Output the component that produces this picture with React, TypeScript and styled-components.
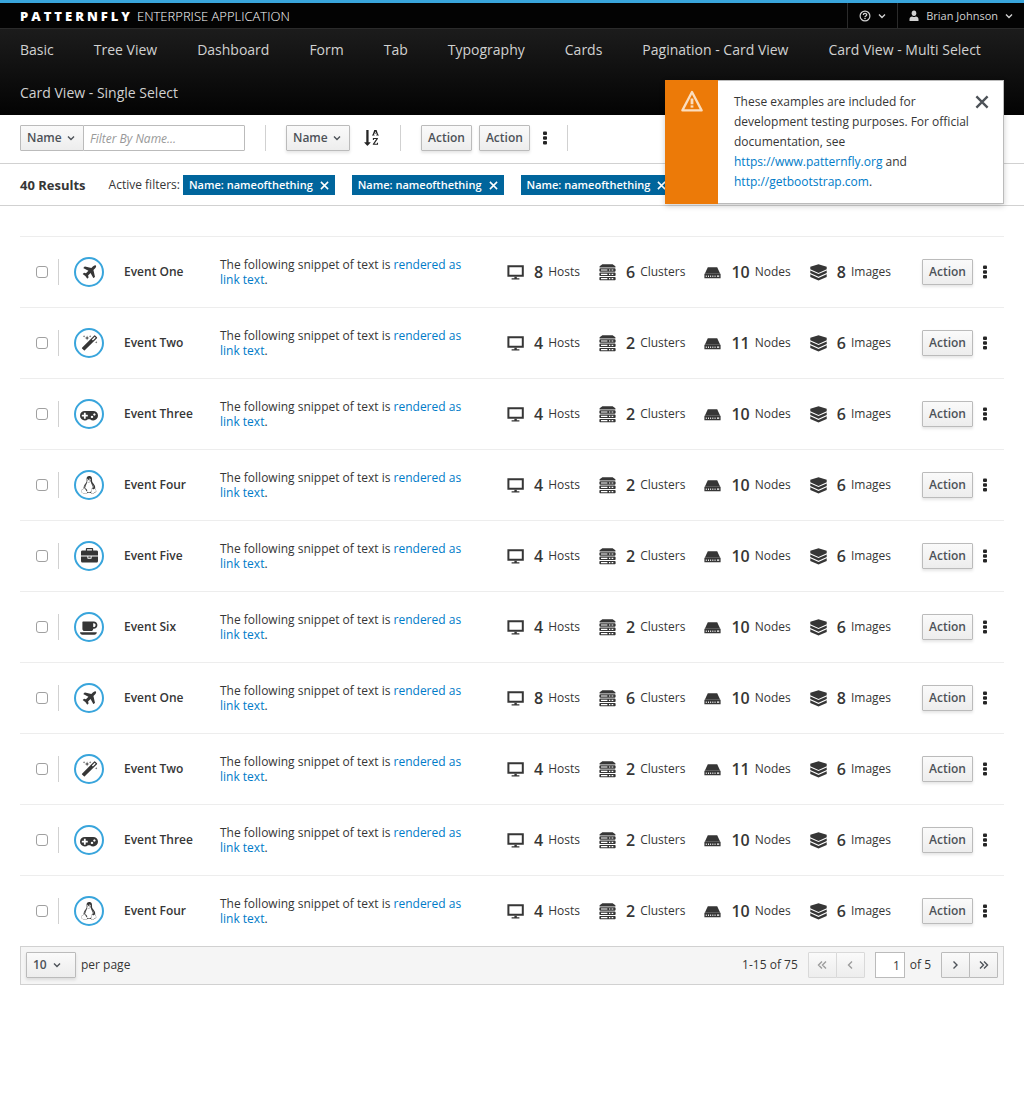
import React from "react";
import styled, { createGlobalStyle, css } from "styled-components";
import { FaLinux } from "react-icons/fa";

const GlobalStyle = createGlobalStyle`
  *, *::before, *::after { box-sizing: border-box; }
  body {
    margin: 0;
    background: #fff;
    color: #363636;
    font-family: "Open Sans", "Noto Sans", sans-serif;
    font-size: 12px;
    line-height: 20px;
  }
  button, input, select { font: inherit; color: inherit; margin: 0; }
  a { color: #007bc8; text-decoration: none; }
  ul, h2, p { margin: 0; padding: 0; }
  ul { list-style: none; }
`;

/* ---------- icons ---------- */

const Svg = styled.svg`
  display: block;
  flex: none;
  fill: currentColor;
`;

const fa: Record<string, { w: number; d: string }> = {
  plane: {
    w: 1792,
    d: "M1568 160q44 52 12 148t-108 172l-161 161 160 696q5 19-12 33l-128 96q-7 6-19 6-4 0-7-1-15-3-21-16l-279-508-259 259 53 194q5 17-8 31l-96 96q-9 9-23 9h-2q-15-2-24-13l-189-252-252-189q-11-7-13-23-1-13 9-25l96-97q9-9 23-9 6 0 8 1l194 53 259-259-508-279q-14-8-17-24-2-16 9-27l128-128q14-13 30-8l665 159 160-160q76-76 172-108t148 12z",
  },
  magic: {
    w: 1792,
    d: "M1254 581l293-293-107-107-293 293zm447-293q0 27-18 45l-1286 1286q-18 18-45 18t-45-18l-198-198q-18-18-18-45t18-45l1286-1286q18-18 45-18t45 18l198 198q18 18 18 45zm-1351-190l98 30-98 30-30 98-30-98-98-30 98-30 30-98zm350 162l196 60-196 60-60 196-60-196-196-60 196-60 60-196zm930 478l98 30-98 30-30 98-30-98-98-30 98-30 30-98zm-640-640l98 30-98 30-30 98-30-98-98-30 98-30 30-98z",
  },
  gamepad: {
    w: 1920,
    d: "M832 1088v-128q0-14-9-23t-23-9h-192v-192q0-14-9-23t-23-9h-128q-14 0-23 9t-9 23v192h-192q-14 0-23 9t-9 23v128q0 14 9 23t23 9h192v192q0 14 9 23t23 9h128q14 0 23-9t9-23v-192h192q14 0 23-9t9-23zm576 64q0-53-37.5-90.5t-90.5-37.5-90.5 37.5-37.5 90.5 37.5 90.5 90.5 37.5 90.5-37.5 37.5-90.5zm256-256q0-53-37.5-90.5t-90.5-37.5-90.5 37.5-37.5 90.5 37.5 90.5 90.5 37.5 90.5-37.5 37.5-90.5zm256 128q0 212-150 362t-362 150q-192 0-338-128h-220q-146 128-338 128-212 0-362-150t-150-362 150-362 362-150h896q212 0 362 150t150 362z",
  },
  briefcase: {
    w: 1792,
    d: "M640 256h512v-128h-512v128zm1152 640v480q0 66-47 113t-113 47h-1472q-66 0-113-47t-47-113v-480h672v160q0 26 19 45t45 19h320q26 0 45-19t19-45v-160h672zm-768 0v128h-256v-128h256zm768-480v384h-1792v-384q0-66 47-113t113-47h352v-160q0-40 28-68t68-28h576q40 0 68 28t28 68v160h352q66 0 113 47t47 113z",
  },
  coffee: {
    w: 1920,
    d: "M1664 640q0-80-56-136t-136-56h-64v384h64q80 0 136-56t56-136zm-1664 768h1792q0 106-75 181t-181 75h-1280q-106 0-181-75t-75-181zm1856-768q0 159-112.5 271.5t-271.5 112.5h-64v32q0 92-66 158t-158 66h-704q-92 0-158-66t-66-158v-736q0-26 19-45t45-19h1152q159 0 271.5 112.5t112.5 271.5z",
  },
  sortAlpha: {
    w: 1792,
    d: "M1191 408h177l-72-218-12-47q-2-16-2-20h-4l-3 20q0 1-3.5 18t-7.5 29zm-455 1000q0 12-10 24l-319 319q-10 9-23 9-12 0-23-9l-320-320q-15-16-7-35 8-20 30-20h192v-1376q0-14 9-23t23-9h192q14 0 23 9t9 23v1376h192q14 0 23 9t9 23zm836 10v233h-584v-90l369-529q12-18 21-27l11-9v-3q-2 0-6.5.5t-7.5.5q-12 3-30 3h-232v115h-120v-229h567v89l-369 530q-6 8-21 26l-11 11v2l14-2q9-2 30-2h248v-119h121zm89-898v106h-288v-106h75l-47-144h-243l-47 144h75v106h-287v-106h70l230-662h162l230 662h70z",
  },
};

const FaGlyph = ({ name, size }: { name: string; size: number }) => (
  <Svg
    aria-hidden
    viewBox={`0 0 ${fa[name].w} 1792`}
    width={Math.round((size * fa[name].w) / 1792)}
    height={size}
  >
    <path d={fa[name].d} />
  </Svg>
);

const Chevron = ({ size = 8 }: { size?: number }) => (
  <Svg aria-hidden width={size} height={size} viewBox="0 0 8 8">
    <path d="M1 2.5L4 5.5L7 2.5" fill="none" stroke="currentColor" strokeWidth="1.4" />
  </Svg>
);

const Angle = ({ paths }: { paths: string }) => (
  <Svg aria-hidden width={12} height={12} viewBox="0 0 12 12">
    <path d={paths} fill="none" stroke="currentColor" strokeWidth="1.4" />
  </Svg>
);

const Dots = () => (
  <Svg aria-hidden width={4} height={14} viewBox="0 0 4 14">
    <rect x="0" y="0.5" width="4" height="3.6" rx="1" />
    <rect x="0" y="5.2" width="4" height="3.6" rx="1" />
    <rect x="0" y="9.9" width="4" height="3.6" rx="1" />
  </Svg>
);

const Cross = ({ size, weight }: { size: number; weight: number }) => (
  <Svg aria-hidden width={size} height={size} viewBox="0 0 12 12">
    <path d="M1.2 1.2L10.8 10.8M10.8 1.2L1.2 10.8" stroke="currentColor" strokeWidth={weight} />
  </Svg>
);

const ScreenIcon = () => (
  <Svg aria-hidden width={17} height={17} viewBox="0 0 17 17">
    <path fillRule="evenodd" d="M.4 1.2h16.400V12.800H.4zM2.400 3.200v7.600h12.400v-7.600z" />
    <path d="M7.400 12.800h2.400v1.500h2.600v1.200H4.600v-1.200h2.800z" />
  </Svg>
);

const slab = (y: number) =>
  `M1 ${y}h15l.6 .6v2.200l-.6 .6H1l-.6-.6v-2.200zM2 ${y + 1.1}v1.200h6.400v-1.200zM10 ${y + 1.1}v1.200h1.300v-1.200zM12.600 ${y + 1.1}v1.200h1.700v-1.200z`;

const ClusterIcon = () => (
  <Svg aria-hidden width={17} height={17} viewBox="0 0 17 17">
    <path d="M3.400 .2h10.200l2.800 2V3.500H.6V2.200z" />
    <path fillRule="evenodd" d={slab(4.3) + slab(8.6) + slab(12.9)} />
  </Svg>
);

const NodeIcon = () => (
  <Svg aria-hidden width={17} height={17} viewBox="0 0 17 17">
    <path d="M3.800 3.200h9.400L16.200 9.800H.8z" />
    <path
      fillRule="evenodd"
      d="M.4 9.800h16.200v4.400H.4zM1.800 11.400v1.600h.9v-1.600zM4 11.400v1.600h.9v-1.600zM6.200 11.400v1.600h.9v-1.600zM8.400 11.400v1.600h.9v-1.600zM10.600 11.400v1.600h.9v-1.600zM13 11.600v1.100h2.200v-1.100z"
    />
  </Svg>
);

const ImageIcon = () => (
  <Svg aria-hidden width={17} height={17} viewBox="0 0 17 17">
    <path d="M8.500 .2L16.700 2.700V5.300L8.500 8.900 .3 5.300V2.700z" />
    <path d="M.3 6.500L8.500 10.100 16.700 6.500V9.100L8.500 12.700 .3 9.100z" />
    <path d="M.3 10.300L8.500 13.900 16.700 10.300V12.900L8.500 16.500 .3 12.900z" />
  </Svg>
);

const UserIcon = () => (
  <Svg aria-hidden width={10} height={12} viewBox="0 0 10 12">
    <ellipse cx="5" cy="3.3" rx="2.3" ry="2.7" />
    <path d="M.5 11V9.2C.5 7.5 1.8 6.8 3.2 6.5c1 .7 2.600 .7 3.600 0C8.200 6.800 9.500 7.500 9.500 9.200V11z" />
  </Svg>
);

const HelpIcon = () => (
  <Svg aria-hidden width={12} height={12} viewBox="0 0 12 12">
    <circle cx="6" cy="6" r="4.9" fill="none" stroke="currentColor" strokeWidth="1.2" />
    <path d="M4.300 4.900C4.300 2.900 7.700 2.900 7.700 4.800 7.700 6 6 5.900 6 7.100" fill="none" stroke="currentColor" strokeWidth="1.300" />
    <rect x="5.300" y="7.800" width="1.400" height="1.300" />
  </Svg>
);

const WarningIcon = () => (
  <Svg aria-hidden width={22} height={22} viewBox="0 0 22 22">
    <path d="M11 2L20.600 20.400H1.400z" fill="none" stroke="currentColor" strokeWidth="2.300" strokeLinejoin="round" />
    <path d="M9.600 8.500h2.800v5.800H9.600z" />
    <rect x="9.600" y="15.400" width="2.800" height="2.200" />
  </Svg>
);

/* ---------- masthead ---------- */

const Page = styled.div`
  position: relative;
`;

const Masthead = styled.header`
  background: #030303;
  border-top: 3px solid #39a5dc;
  color: #d1d1d1;
`;

const TopBar = styled.div`
  display: flex;
  justify-content: space-between;
  height: 25px;
  padding-left: 20px;
`;

const Brand = styled.a`
  display: flex;
  align-items: center;
  gap: 4px;
  padding-top: 1px;
  color: #fff;
  font-size: 13px;
  font-weight: 300;
  white-space: nowrap;
`;

const BrandName = styled.strong`
  font-weight: 800;
  letter-spacing: 3px;
`;

const Utilities = styled.div`
  display: flex;
`;

const UtilityButton = styled.button`
  display: flex;
  align-items: center;
  gap: 7px;
  padding: 0 11px;
  border: 0;
  border-left: 1px solid #2b2b2b;
  background: none;
  color: #d1d1d1;
  font-size: 11px;
  font-weight: 500;
`;

const Nav = styled.nav`
  border-top: 1px solid #2b2b2b;
  background: linear-gradient(#1c1c1c, #030303);
`;

const NavList = styled.ul`
  display: flex;
  flex-wrap: wrap;
`;

const NavLink = styled.a`
  display: block;
  padding: 0 20px 2px;
  color: #d1d1d1;
  font-size: 14px;
  line-height: 41px;
`;

/* ---------- controls ---------- */

const raised = css`
  height: 26px;
  border: 1px solid #bbb;
  border-radius: 1px;
  background: linear-gradient(#fafafa, #ededed);
  color: #4d5258;
  font-weight: 600;
`;

const Button = styled.button`
  ${raised}
  padding: 0 6px;
  box-shadow: 0 2px 3px rgba(3, 3, 3, 0.1);
`;

const KebabButton = styled.button<{ $width: number }>`
  display: flex;
  align-items: center;
  justify-content: center;
  width: ${(p) => p.$width}px;
  height: 26px;
  padding: 0;
  border: 0;
  background: none;
  color: #252525;
`;

const SelectBox = styled.span<{ $width: number; $inset: number; $flat?: boolean }>`
  display: grid;
  align-items: center;
  width: ${(p) => p.$width}px;
  color: #4d5258;
  box-shadow: ${(p) => (p.$flat ? "none" : "0 2px 3px rgba(3, 3, 3, 0.1)")};

  > * { grid-area: 1 / 1; }
  > svg { justify-self: end; margin-right: ${(p) => p.$inset}px; pointer-events: none; }
`;

const Select = styled.select`
  ${raised}
  width: 100%;
  padding: 0 0 0 6px;
  appearance: none;
`;

type DropDownProps = { label: string; value: string; width: number; flat?: boolean; inset?: number };

const DropDown = ({ label, value, width, flat, inset = 9 }: DropDownProps) => (
  <SelectBox $width={width} $inset={inset} $flat={flat}>
    <Select aria-label={label} defaultValue={value}>
      <option>{value}</option>
    </Select>
    <Chevron />
  </SelectBox>
);

/* ---------- toolbar ---------- */

const Toolbar = styled.form`
  display: flex;
  align-items: center;
  padding: 10px 20px 12px;
  border-bottom: 1px solid #d1d1d1;
`;

const Group = styled.div<{ $gap: number; $end?: number }>`
  display: flex;
  align-items: center;
  gap: ${(p) => p.$gap}px;
  height: 26px;
  padding-right: ${(p) => p.$end ?? 20}px;
  margin-right: 20px;
  border-right: 1px solid #d1d1d1;
`;

const FilterInput = styled.input`
  width: 162px;
  height: 26px;
  margin-left: -1px;
  padding: 2px 6px;
  border: 1px solid #bbb;
  border-radius: 1px;

  &::placeholder { color: #999; font-style: italic; opacity: 1; }
`;

const SortButton = styled.button`
  display: flex;
  padding: 0;
  border: 0;
  background: none;
  color: #252525;
`;

const Results = styled.div`
  display: flex;
  align-items: center;
  padding: 11px 20px 10px;
  border-bottom: 1px solid #d1d1d1;
`;

const ResultCount = styled.h2`
  margin-right: 23px;
  font-size: 13px;
  font-weight: 700;
`;

const FilterTags = styled.ul`
  display: flex;
  gap: 17px;
  margin-left: 3px;
`;

const Tag = styled.li`
  display: flex;
  align-items: center;
  gap: 7px;
  height: 20px;
  padding: 0 6px;
  background: #00659c;
  color: #fff;
  font-size: 11px;
  font-weight: 600;
`;

const TagRemove = styled.button`
  display: flex;
  padding: 0;
  border: 0;
  background: none;
`;

/* ---------- toast ---------- */

const Toast = styled.aside`
  position: absolute;
  top: 80px;
  right: 20px;
  display: flex;
  width: 339px;
  border: 1px solid #bbb;
  border-left: 0;
  background: #fff;
  box-shadow: 0 2px 6px rgba(3, 3, 3, 0.2);
`;

const ToastFlag = styled.div`
  display: flex;
  justify-content: center;
  width: 53px;
  margin: -1px 0;
  padding-top: 10px;
  background: #ec7a08;
  color: #fbdebf;
`;

const ToastText = styled.p`
  flex: 1;
  padding: 11px 0 11px 16px;
`;

const ToastClose = styled.button`
  align-self: flex-start;
  margin: 14px 14px 0 0;
  padding: 0;
  border: 0;
  background: none;
  color: #4d5258;
`;

/* ---------- list ---------- */

const Content = styled.main`
  padding: 30px 20px 0;
`;

const Row = styled.li`
  display: flex;
  align-items: center;
  height: 71px;
  padding: 0 7px 0 16px;
  border-top: 1px solid #ededed;
`;

const CheckCell = styled.div`
  display: flex;
  align-items: center;
  height: 26px;
  padding-right: 10px;
  border-right: 1px solid #d1d1d1;
`;

const Check = styled.input`
  width: 12px;
  height: 12px;
  margin: 0;
  border: 1px solid #a0a0a0;
  border-radius: 3px;
  background: #fff;
  appearance: none;

  &:checked { background: #0088ce; }
`;

const Badge = styled.div`
  display: flex;
  align-items: center;
  justify-content: center;
  width: 30px;
  height: 30px;
  margin: 0 20px 0 15px;
  border: 2px solid #39a5dc;
  border-radius: 50%;
`;

const Title = styled.div`
  width: 96px;
  font-weight: 600;
`;

const Description = styled.p`
  flex: 1;
  padding-right: 40px;
  line-height: 15px;
`;

const Stats = styled.ul`
  display: flex;
  gap: 19px;
  margin-right: 31px;
`;

const Stat = styled.li`
  display: flex;
  align-items: center;
  gap: 5px;

  > svg { margin-right: 5px; }
`;

const Count = styled.strong`
  font-size: 16px;
  font-weight: 600;
`;

/* ---------- pagination ---------- */

const Pager = styled.form`
  display: flex;
  align-items: center;
  justify-content: space-between;
  padding: 5px 5px 6px;
  border: 1px solid #d1d1d1;
  background: #f5f5f5;
`;

const PagerSide = styled.div<{ $gap: number }>`
  display: flex;
  align-items: center;
  gap: ${(p) => p.$gap}px;
`;

const PageButtons = styled.div`
  display: flex;
`;

const PageButton = styled.button`
  ${raised}
  display: flex;
  align-items: center;
  justify-content: center;
  width: 29px;
  padding: 0;

  & + & { margin-left: -1px; }
  &:disabled { border-color: #d9d9d9; color: #9c9c9c; }
`;

const PageField = styled.label`
  display: flex;
  align-items: center;
  gap: 5px;
`;

const PageInput = styled.input`
  width: 30px;
  height: 26px;
  padding: 0 4px;
  border: 1px solid #bbb;
  background: #fff;
  text-align: right;
`;

/* ---------- data ---------- */

const navItems = [
  "Basic",
  "Tree View",
  "Dashboard",
  "Form",
  "Tab",
  "Typography",
  "Cards",
  "Pagination - Card View",
  "Card View - Multi Select",
  "Card View - Single Select",
];

const events = [
  { name: "Event One", icon: "plane", counts: [8, 6, 10, 8] },
  { name: "Event Two", icon: "magic", counts: [4, 2, 11, 6] },
  { name: "Event Three", icon: "gamepad", counts: [4, 2, 10, 6] },
  { name: "Event Four", icon: "linux", counts: [4, 2, 10, 6] },
  { name: "Event Five", icon: "briefcase", counts: [4, 2, 10, 6] },
  { name: "Event Six", icon: "coffee", counts: [4, 2, 10, 6] },
];
const rows = [...events, ...events.slice(0, 4)];

const statKinds = [
  { label: "Hosts", Icon: ScreenIcon },
  { label: "Clusters", Icon: ClusterIcon },
  { label: "Nodes", Icon: NodeIcon },
  { label: "Images", Icon: ImageIcon },
];

export default function App() {
  return (
    <Page>
      <GlobalStyle />
      <Masthead>
        <TopBar>
          <Brand href="#">
            <BrandName>PATTERNFLY</BrandName>
            <span>ENTERPRISE APPLICATION</span>
          </Brand>
          <Utilities>
            <UtilityButton aria-label="Help">
              <HelpIcon />
              <Chevron />
            </UtilityButton>
            <UtilityButton>
              <UserIcon />
              Brian Johnson
              <Chevron />
            </UtilityButton>
          </Utilities>
        </TopBar>
        <Nav>
          <NavList>
            {navItems.map((item) => (
              <li key={item}>
                <NavLink href="#">{item}</NavLink>
              </li>
            ))}
          </NavList>
        </Nav>
      </Masthead>

      <Toolbar>
        <Group $gap={0}>
          <DropDown label="Filter field" value="Name" width={64} flat />
          <FilterInput aria-label="Filter by name" placeholder="Filter By Name..." />
        </Group>
        <Group $gap={14}>
          <DropDown label="Sort field" value="Name" width={64} />
          <SortButton type="button" aria-label="Sort ascending">
            <FaGlyph name="sortAlpha" size={16} />
          </SortButton>
        </Group>
        <Group $gap={7} $end={14}>
          <Button type="button">Action</Button>
          <Button type="button">Action</Button>
          <KebabButton type="button" $width={16} aria-label="More actions">
            <Dots />
          </KebabButton>
        </Group>
      </Toolbar>

      <Results>
        <ResultCount>40 Results</ResultCount>
        <span>Active filters:</span>
        <FilterTags>
          {[1, 2, 3].map((n) => (
            <Tag key={n}>
              Name: nameofthething
              <TagRemove aria-label="Remove filter">
                <Cross size={9} weight={2} />
              </TagRemove>
            </Tag>
          ))}
        </FilterTags>
      </Results>

      <Toast>
        <ToastFlag>
          <WarningIcon />
        </ToastFlag>
        <ToastText>
          These examples are included for development testing purposes. For official documentation, see{" "}
          <a href="#patternfly">https://www.patternfly.org</a> and <a href="#bootstrap">http://getbootstrap.com</a>.
        </ToastText>
        <ToastClose aria-label="Close">
          <Cross size={14} weight={2} />
        </ToastClose>
      </Toast>

      <Content>
        <ul>
          {rows.map((row, i) => (
            <Row key={i}>
              <CheckCell>
                <Check type="checkbox" aria-label={`Select ${row.name}`} />
              </CheckCell>
              <Badge>{row.icon === "linux" ? <FaLinux size={18} /> : <FaGlyph name={row.icon} size={17} />}</Badge>
              <Title>{row.name}</Title>
              <Description>
                The following snippet of text is <a href="#link">rendered as link text</a>.
              </Description>
              <Stats>
                {statKinds.map(({ label, Icon }, k) => (
                  <Stat key={label}>
                    <Icon />
                    <Count>{row.counts[k]}</Count>
                    {label}
                  </Stat>
                ))}
              </Stats>
              <Button>Action</Button>
              <KebabButton $width={24} aria-label="More actions">
                <Dots />
              </KebabButton>
            </Row>
          ))}
        </ul>

        <Pager>
          <PagerSide $gap={5}>
            <DropDown label="Items per page" value="10" width={50} inset={15} />
            per page
          </PagerSide>
          <PagerSide $gap={10}>
            <span>1-15 of 75</span>
            <PageButtons>
              <PageButton type="button" disabled aria-label="First page">
                <Angle paths="M6 2.500L2.500 6L6 9.500M10 2.500L6.500 6L10 9.500" />
              </PageButton>
              <PageButton type="button" disabled aria-label="Previous page">
                <Angle paths="M8 2.500L4.500 6L8 9.500" />
              </PageButton>
            </PageButtons>
            <PageField>
              <PageInput aria-label="Current page" defaultValue="1" />
              of 5
            </PageField>
            <PageButtons>
              <PageButton type="button" aria-label="Next page">
                <Angle paths="M3.500 2.500L7 6L3.500 9.500" />
              </PageButton>
              <PageButton type="button" aria-label="Last page">
                <Angle paths="M2 2.500L5.500 6L2 9.500M6 2.500L9.500 6L6 9.500" />
              </PageButton>
            </PageButtons>
          </PagerSide>
        </Pager>
      </Content>
    </Page>
  );
}
